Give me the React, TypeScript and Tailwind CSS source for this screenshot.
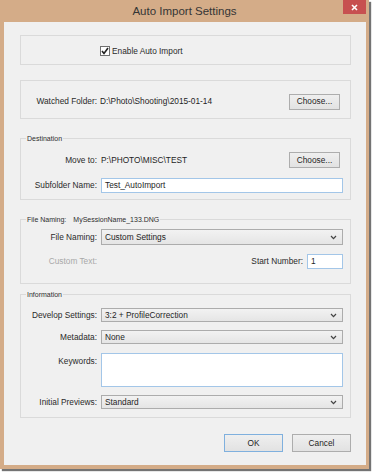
import React from "react";

const font = { fontFamily: '"Liberation Sans", Arial, sans-serif' };

function Chevron() {
  return (
    <svg width="7" height="5" viewBox="0 0 7 5" className="shrink-0">
      <path d="M1 1 L3.5 3.7 L6 1" fill="none" stroke="#444" strokeWidth="1.2" />
    </svg>
  );
}

function Select({ value, h = "h-[15px]" }: { value: string; h?: string }) {
  return (
    <div
      className={
        "flex-1 flex items-center justify-between pl-[3px] pr-[5px] border border-[#acacac] bg-gradient-to-b from-[#f2f2f2] to-[#e5e5e5] text-[8.3px] text-[#1e1e1e] " +
        h
      }
    >
      <span>{value}</span>
      <Chevron />
    </div>
  );
}

function Btn({ label, primary }: { label: string; primary?: boolean }) {
  return (
    <div
      className={
        "flex-1 flex items-center justify-center border bg-gradient-to-b from-[#efefef] to-[#e2e2e2] text-[8.3px] text-[#1e1e1e] " +
        (primary ? "border-[#7fb0de]" : "border-[#adadad]")
      }
    >
      {label}
    </div>
  );
}

function Group({ legend, children, className }: { legend?: React.ReactNode; children: React.ReactNode; className: string }) {
  return (
    <div className={"relative border border-[#dadada] " + className}>
      {legend && (
        <div className="absolute -top-[5px] left-[5px] px-[1px] bg-[#f0f0f0] text-[7px] text-[#2e2e2e] leading-[9px]">
          {legend}
        </div>
      )}
      {children}
    </div>
  );
}

function Label({ children, muted }: { children: React.ReactNode; muted?: boolean }) {
  return (
    <div className={"w-[76px] shrink-0 text-right text-[8.3px] whitespace-nowrap " + (muted ? "text-[#a8a8a8]" : "text-[#2a2a2a]")}>
      {children}
    </div>
  );
}

export default function App() {
  return (
    <div className="w-[374px] h-[476px] bg-white" style={font}>
      <div className="w-[369px] h-[469px] bg-[#d4ac88] shadow-[2px_2px_1px_rgba(0,0,0,0.55)] flex flex-col">
        {/* Title bar */}
        <div className="relative h-[22px] flex items-center justify-center pt-[1px]">
          <span className="text-[11.5px] text-[#353535]">Auto Import Settings</span>
          <div className="absolute top-0 right-[3px] w-[23px] h-[14px] bg-[#c75050] flex items-center justify-center">
            <svg width="7" height="7" viewBox="0 0 7 7">
              <path d="M1 1 L6 6 M6 1 L1 6" stroke="white" strokeWidth="1.6" />
            </svg>
          </div>
        </div>

        {/* Client area */}
        <div className="ml-[4px] w-[362px] h-[443px] bg-[#f0f0f0] pl-[16px] pr-[15px] pt-[13px] flex flex-col">
          <Group className="h-[30px] flex items-center pl-[79px] pt-[2px]">
            <div className="flex items-center gap-[2px]">
              <div className="w-[10px] h-[10px] border border-[#707070] bg-white flex items-center justify-center">
                <svg width="8" height="8" viewBox="0 0 8 8">
                  <path d="M1 4 L3 6.5 L7 1" fill="none" stroke="#222" strokeWidth="1.6" />
                </svg>
              </div>
              <span className="text-[8.3px] text-[#2a2a2a]">Enable Auto Import</span>
            </div>
          </Group>

          <Group className="mt-[15px] h-[39px] flex items-center pt-[4px] pr-[10px]">
            <Label>Watched Folder:</Label>
            <span className="ml-[3px] flex-1 text-[8.3px] text-[#1e1e1e]">D:\Photo\Shooting\2015-01-14</span>
            <div className="w-[51px] h-[16px] flex">
              <Btn label="Choose..." />
            </div>
          </Group>

          <Group legend="Destination" className="mt-[19px] h-[62px] pt-[13px] pr-[7px] flex flex-col">
            <div className="flex items-center h-[16px] pr-[3px]">
              <Label>Move to:</Label>
              <span className="ml-[4px] flex-1 text-[8.3px] text-[#1e1e1e]">P:\PHOTO\MISC\TEST</span>
              <div className="w-[51px] h-[16px] flex">
                <Btn label="Choose..." />
              </div>
            </div>
            <div className="mt-[10px] flex items-center">
              <Label>Subfolder Name:</Label>
              <div className="ml-[4px] flex-1 h-[15px] border border-[#a3c6e8] bg-white flex items-center pl-[3px] text-[8.3px] text-[#1e1e1e]">
                Test_AutoImport
              </div>
            </div>
          </Group>

          <Group
            legend={
              <span>
                File Naming:<span className="ml-[7px]">MySessionName_133.DNG</span>
              </span>
            }
            className="mt-[19px] h-[65px] pt-[9px] pr-[7px] flex flex-col"
          >
            <div className="flex items-center">
              <Label>File Naming:</Label>
              <div className="ml-[4px] flex-1 flex">
                <Select value="Custom Settings" h="h-[16px]" />
              </div>
            </div>
            <div className="mt-[9px] flex items-center">
              <Label muted>Custom Text:</Label>
              <div className="flex-1 flex items-center justify-end">
                <span className="text-[8.3px] text-[#2a2a2a]">Start Number:</span>
                <div className="ml-[4px] w-[36px] h-[15px] border border-[#a3c6e8] bg-white flex items-center pl-[3px] text-[8.3px] text-[#1e1e1e]">
                  1
                </div>
              </div>
            </div>
          </Group>

          <Group legend="Information" className="mt-[10px] h-[124px] pt-[13px] pr-[7px] flex flex-col">
            <div className="flex items-center">
              <Label>Develop Settings:</Label>
              <div className="ml-[4px] flex-1 flex">
                <Select value="3:2 + ProfileCorrection" h="h-[14px]" />
              </div>
            </div>
            <div className="mt-[8px] flex items-center">
              <Label>Metadata:</Label>
              <div className="ml-[4px] flex-1 flex">
                <Select value="None" h="h-[14px]" />
              </div>
            </div>
            <div className="mt-[9px] flex items-start">
              <div className="pt-[2px] flex">
                <Label>Keywords:</Label>
              </div>
              <div className="ml-[4px] flex-1 h-[34px] border border-[#a3c6e8] bg-white" />
            </div>
            <div className="mt-[8px] flex items-center">
              <Label>Initial Previews:</Label>
              <div className="ml-[4px] flex-1 flex">
                <Select value="Standard" h="h-[14px]" />
              </div>
            </div>
          </Group>

          <div className="mt-[16px] flex justify-end gap-[9px]">
            <div className="w-[59px] h-[18px] flex">
              <Btn label="OK" primary />
            </div>
            <div className="w-[59px] h-[18px] flex">
              <Btn label="Cancel" />
            </div>
          </div>
        </div>
      </div>
    </div>
  );
}
